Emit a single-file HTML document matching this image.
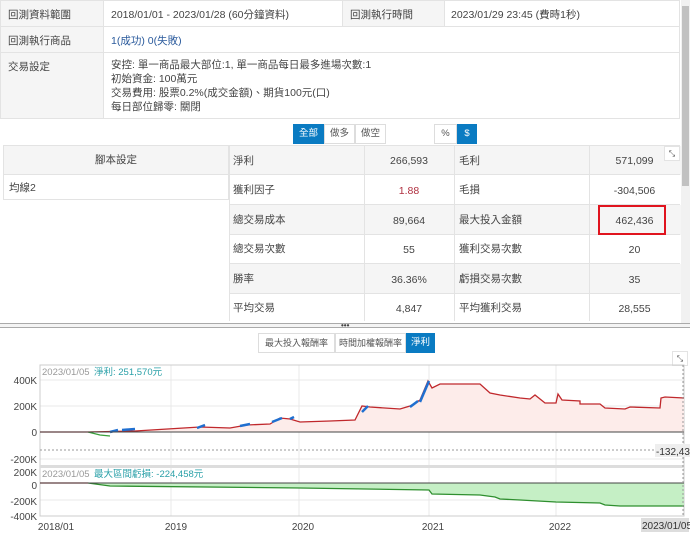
<!DOCTYPE html>
<html><head><meta charset="utf-8"><style>
*{box-sizing:border-box;margin:0;padding:0}
body{width:690px;height:534px;overflow:hidden;background:#fff;font-family:"Liberation Sans","Noto Sans CJK TC",sans-serif;font-size:10.5px;color:#444;position:relative}
.a{position:absolute}
.lbl{background:#f5f5f5}
.bd{border:1px solid #e3e3e3}
.btn{position:absolute;height:20px;line-height:18px;text-align:center;font-size:9.5px;border:1px solid #ddd;background:#fff;color:#555;white-space:nowrap;overflow:hidden}
.on{background:#0a7bc2;color:#fff;border-color:#0a7bc2}
</style></head><body>
<!-- top table -->
<div class="a bd" style="left:0;top:0;width:680px;height:119px"></div>
<div class="a lbl" style="left:1px;top:1px;width:103px;height:117px;border-right:1px solid #e3e3e3"></div>
<div class="a lbl" style="left:342px;top:1px;width:103px;height:25px;border-left:1px solid #e3e3e3;border-right:1px solid #e3e3e3"></div>
<div class="a" style="left:0;top:26px;width:680px;border-top:1px solid #e3e3e3"></div>
<div class="a" style="left:0;top:52px;width:680px;border-top:1px solid #e3e3e3"></div>
<div class="a" style="left:8px;top:7px">回測資料範圍</div>
<div class="a" style="left:111px;top:7px">2018/01/01 - 2023/01/28 (60分鐘資料)</div>
<div class="a" style="left:350px;top:7px">回測執行時間</div>
<div class="a" style="left:451px;top:7px">2023/01/29 23:45 (費時1秒)</div>
<div class="a" style="left:8px;top:33px">回測執行商品</div>
<div class="a" style="left:111px;top:33px;color:#2a5a9c">1(成功) 0(失敗)</div>
<div class="a" style="left:8px;top:59px">交易設定</div>
<div class="a" style="left:111px;top:58px;line-height:14px">安控: 單一商品最大部位:1, 單一商品每日最多進場次數:1<br>初始資金: 100萬元<br>交易費用: 股票0.2%(成交金額)、期貨100元(口)<br>每日部位歸零: 關閉</div>
<!-- scrollbar -->
<div class="a" style="left:681px;top:0;width:9px;height:325px;background:#f1f1f1"></div>
<div class="a" style="left:682px;top:6px;width:7px;height:180px;background:#c1c1c1"></div>
<!-- buttons -->
<div class="btn on" style="left:293px;top:124px;width:31px">全部</div>
<div class="btn" style="left:324px;top:124px;width:31px">做多</div>
<div class="btn" style="left:355px;top:124px;width:31px">做空</div>
<div class="btn" style="left:434px;top:124px;width:23px">%</div>
<div class="btn on" style="left:457px;top:124px;width:20px">$</div>
<!-- left panel -->
<div class="a lbl bd" style="left:3px;top:145px;width:226px;height:30px;text-align:center;line-height:28px">腳本設定</div>
<div class="a bd" style="left:3px;top:174px;width:226px;height:26px;padding:6px 5px;border-top:none">均線2</div>
<!-- stats -->
<div class="a" style="left:229px;top:145px;width:451px;height:176px;border-left:1px solid #e3e3e3;border-top:1px solid #e3e3e3">
<div class="a lbl" style="left:0;top:0;width:451px;height:29px"></div>
<div class="a lbl" style="left:0;top:59px;width:451px;height:30px"></div>
<div class="a lbl" style="left:0;top:118px;width:451px;height:30px"></div>
</div>
<div class="a" style="left:229px;top:174px;width:451px;border-top:1px solid #e3e3e3"></div>
<div class="a" style="left:229px;top:204px;width:451px;border-top:1px solid #e3e3e3"></div>
<div class="a" style="left:229px;top:234px;width:451px;border-top:1px solid #e3e3e3"></div>
<div class="a" style="left:229px;top:263px;width:451px;border-top:1px solid #e3e3e3"></div>
<div class="a" style="left:229px;top:293px;width:451px;border-top:1px solid #e3e3e3"></div>
<div class="a" style="left:364px;top:145px;height:176px;border-left:1px solid #e3e3e3"></div>
<div class="a" style="left:454px;top:145px;height:176px;border-left:1px solid #e3e3e3"></div>
<div class="a" style="left:589px;top:145px;height:176px;border-left:1px solid #e3e3e3"></div>
<div class="a" style="left:233px;top:153px">淨利</div><div class="a" style="left:364px;width:90px;top:155px;text-align:center">266,593</div>
<div class="a" style="left:459px;top:153px">毛利</div><div class="a" style="left:589px;width:91px;top:155px;text-align:center">571,099</div>
<div class="a" style="left:233px;top:182px">獲利因子</div><div class="a" style="left:364px;width:90px;top:185px;text-align:center;color:#b03040">1.88</div>
<div class="a" style="left:459px;top:182px">毛損</div><div class="a" style="left:589px;width:91px;top:185px;text-align:center">-304,506</div>
<div class="a" style="left:233px;top:212px">總交易成本</div><div class="a" style="left:364px;width:90px;top:215px;text-align:center">89,664</div>
<div class="a" style="left:459px;top:212px">最大投入金額</div><div class="a" style="left:589px;width:91px;top:215px;text-align:center">462,436</div>
<div class="a" style="left:598px;top:205px;width:68px;height:30px;border:2px solid #e0141e"></div>
<div class="a" style="left:233px;top:241px">總交易次數</div><div class="a" style="left:364px;width:90px;top:244px;text-align:center">55</div>
<div class="a" style="left:459px;top:241px">獲利交易次數</div><div class="a" style="left:589px;width:91px;top:244px;text-align:center">20</div>
<div class="a" style="left:233px;top:271px">勝率</div><div class="a" style="left:364px;width:90px;top:274px;text-align:center">36.36%</div>
<div class="a" style="left:459px;top:271px">虧損交易次數</div><div class="a" style="left:589px;width:91px;top:274px;text-align:center">35</div>
<div class="a" style="left:233px;top:300px">平均交易</div><div class="a" style="left:364px;width:90px;top:303px;text-align:center">4,847</div>
<div class="a" style="left:459px;top:300px">平均獲利交易</div><div class="a" style="left:589px;width:91px;top:303px;text-align:center">28,555</div>
<div class="a bd" style="left:664px;top:146px;width:16px;height:15px;font-size:8px;text-align:center;line-height:13px;background:#fff">⤡</div>
<!-- divider -->
<div class="a" style="left:0;top:323px;width:690px;height:5px;border-top:1px solid #aaa;border-bottom:1px solid #aaa;background:#f4f4f4"></div>
<div class="a" style="left:341px;top:321px;font-size:8px;font-weight:bold">•••</div>
<!-- chart buttons -->
<div class="btn" style="left:258px;top:333px;width:77px;font-size:9px">最大投入報酬率</div>
<div class="btn" style="left:335px;top:333px;width:71px;font-size:9px">時間加權報酬率</div>
<div class="btn on" style="left:406px;top:333px;width:29px">淨利</div>
<div class="a bd" style="left:672px;top:351px;width:16px;height:15px;font-size:8px;text-align:center;line-height:13px">⤡</div>
<svg class="a" style="left:0;top:360px" width="690" height="174" viewBox="0 360 690 174">
<g stroke="#e8e8e8" stroke-width="1">
<line x1="40" y1="380" x2="684" y2="380"/><line x1="40" y1="406" x2="684" y2="406"/><line x1="40" y1="459" x2="684" y2="459"/>
<line x1="40" y1="500" x2="684" y2="500"/>
<line x1="171" y1="365" x2="171" y2="516"/><line x1="299" y1="365" x2="299" y2="516"/><line x1="429" y1="365" x2="429" y2="516"/><line x1="556" y1="365" x2="556" y2="516"/>
</g>
<rect x="40" y="365" width="644" height="101" fill="none" stroke="#ccc"/>
<rect x="40" y="467" width="644" height="49" fill="none" stroke="#ccc"/>
<rect x="40" y="465" width="644" height="3" fill="#ddd"/>
<polygon fill="#fdecea" points="40,432 88,432 135,431 200,427 230,428 247,425 270,424 280,418 290,419 300,422 330,421 355,420 362,406 370,407 400,409 410,406 420,400 428,381 432,388 440,384 480,384 490,393 500,395 520,398 530,399 535,395 545,403 556,403 558,394 562,400 580,401 580,404 600,404 605,408 625,409 660,408 661,398 665,397 684,398 684,432"/>
<polyline fill="none" stroke="#c0282c" stroke-width="1.3" points="40,432 88,432 135,431 200,427 230,428 247,425 270,424 280,418 290,419 300,422 330,421 355,420 362,406 370,407 400,409 410,406 420,400 428,381 432,388 440,384 480,384 490,393 500,395 520,398 530,399 535,395 545,403 556,403 558,394 562,400 580,401 580,404 600,404 605,408 625,409 630,407 660,408 661,398 665,397 684,398"/>
<polyline fill="none" stroke="#3aa03a" stroke-width="1.3" points="88,432 100,435 110,436"/>
<g stroke="#1f6fd0" stroke-width="2.5" fill="none"><polyline points="110,432 118,430"/><polyline points="122,430 135,429"/><polyline points="197,428 205,425"/><polyline points="240,426 250,424"/><polyline points="272,422 282,418"/><polyline points="290,419 294,417"/><polyline points="362,412 368,406"/><polyline points="410,407 418,401"/><polyline points="420,402 429,381"/></g>
<line x1="40" y1="432" x2="684" y2="432" stroke="#444"/>
<line x1="40" y1="450" x2="684" y2="450" stroke="#999" stroke-dasharray="2,2"/>
<polygon fill="#c5efc5" points="40,483 88,483 110,486 300,488 429,490 432,494 480,495 495,497 500,499 520,500 556,502 600,503 605,505 620,506 684,506 684,483"/>
<polyline fill="none" stroke="#c0282c" stroke-width="1.3" points="40,483 88,483"/>
<polyline fill="none" stroke="#2f8f2f" stroke-width="1.3" points="88,483 110,486 300,488 429,490 432,494 480,495 495,497 500,499 520,500 556,502 600,503 605,505 620,506 684,506"/>
<line x1="40" y1="483" x2="684" y2="483" stroke="#444"/>
<line x1="683" y1="365" x2="683" y2="516" stroke="#999" stroke-dasharray="2,2"/>
<g font-family="Liberation Sans,sans-serif" font-size="10" fill="#444" text-anchor="end">
<text x="37" y="384">400K</text><text x="37" y="410">200K</text><text x="37" y="436">0</text><text x="37" y="463">-200K</text>
<text x="37" y="476">200K</text><text x="37" y="489">0</text><text x="37" y="505">-200K</text><text x="37" y="520">-400K</text>
</g>
<g font-family="Liberation Sans,sans-serif" font-size="10" fill="#444" text-anchor="middle">
<text x="56" y="530">2018/01</text><text x="176" y="530">2019</text><text x="303" y="530">2020</text><text x="433" y="530">2021</text><text x="560" y="530">2022</text>
</g>
<rect x="641" y="518" width="48" height="14" fill="#ddd"/><text x="642" y="529" font-size="10" font-family="Liberation Sans,sans-serif" fill="#333">2023/01/05</text>
<rect x="655" y="444" width="35" height="13" fill="#eee"/><text x="656" y="455" font-size="10" font-family="Liberation Sans,sans-serif" fill="#333">-132,434</text>
<text x="42" y="375" font-size="9.5" font-family="Liberation Sans,sans-serif" fill="#999">2023/01/05</text>
<text x="94" y="375" font-size="9.5" font-family="Liberation Sans,Noto Sans CJK TC,sans-serif" fill="#2aa0a8">淨利: 251,570元</text>
<text x="42" y="477" font-size="9.5" font-family="Liberation Sans,sans-serif" fill="#999">2023/01/05</text>
<text x="94" y="477" font-size="9.5" font-family="Liberation Sans,Noto Sans CJK TC,sans-serif" fill="#2aa0a8">最大區間虧損: -224,458元</text>
</svg>
</body></html>
